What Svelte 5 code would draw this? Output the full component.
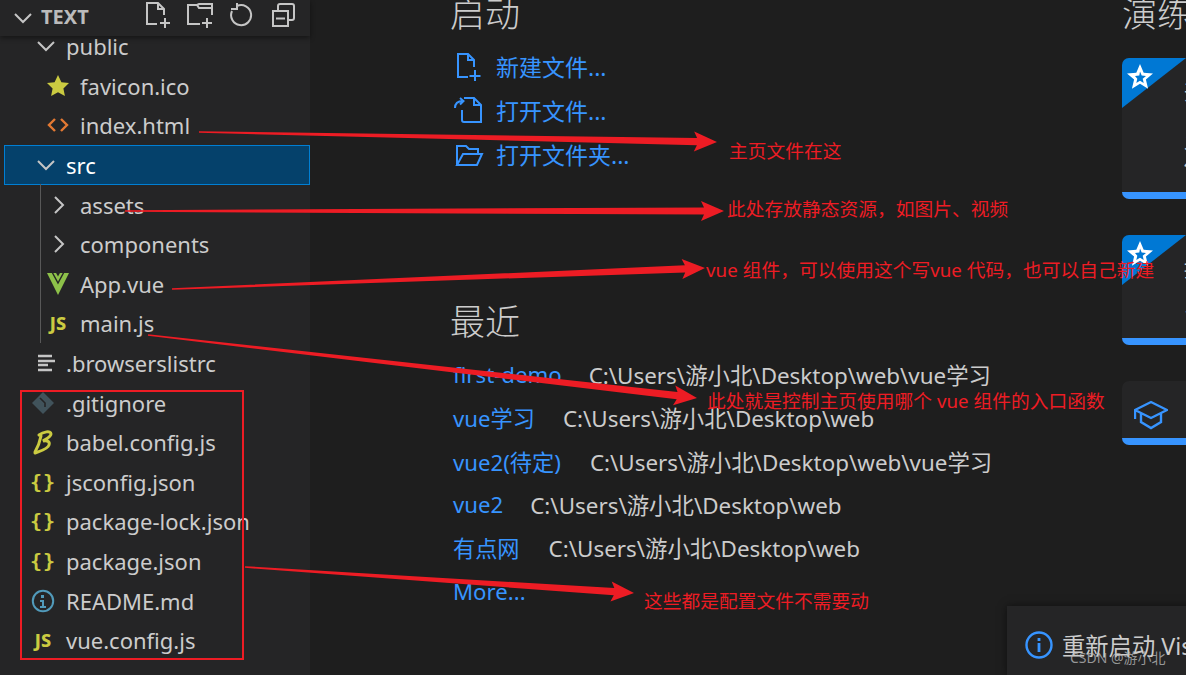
<script>
    const tree = [
        { name: 'public', depth: 1, icon: 'open' },
        { name: 'favicon.ico', depth: 2, icon: 'star' },
        { name: 'index.html', depth: 2, icon: 'html' },
        { name: 'src', depth: 1, icon: 'open', selected: true },
        { name: 'assets', depth: 2, icon: 'closed' },
        { name: 'components', depth: 2, icon: 'closed' },
        { name: 'App.vue', depth: 2, icon: 'vue' },
        { name: 'main.js', depth: 2, icon: 'js' },
        { name: '.browserslistrc', depth: 1, icon: 'lines' },
        { name: '.gitignore', depth: 1, icon: 'git' },
        { name: 'babel.config.js', depth: 1, icon: 'babel' },
        { name: 'jsconfig.json', depth: 1, icon: 'json' },
        { name: 'package-lock.json', depth: 1, icon: 'json' },
        { name: 'package.json', depth: 1, icon: 'json' },
        { name: 'README.md', depth: 1, icon: 'info' },
        { name: 'vue.config.js', depth: 1, icon: 'js' }
    ];

    const recent = [
        { name: 'first-demo', path: 'C:\\Users\\游小北\\Desktop\\web\\vue学习', gap: 27 },
        { name: 'vue学习', path: 'C:\\Users\\游小北\\Desktop\\web', gap: 28 },
        { name: 'vue2(待定)', path: 'C:\\Users\\游小北\\Desktop\\web\\vue学习', gap: 29 },
        { name: 'vue2', path: 'C:\\Users\\游小北\\Desktop\\web', gap: 27 },
        { name: '有点网', path: 'C:\\Users\\游小北\\Desktop\\web', gap: 29 }
    ];

    const notes = [
        { text: '主页文件在这', x: 729, y: 138 },
        { text: '此处存放静态资源，如图片、视频', x: 727, y: 196 },
        { text: 'vue 组件，可以使用这个写vue 代码，也可以自己新建', x: 706, y: 257 },
        { text: '此处就是控制主页使用哪个 vue 组件的入口函数', x: 707, y: 388 },
        { text: '这些都是配置文件不需要动', x: 644, y: 588 }
    ];

    // tapered line plus a notched head, tip at x2,y2
    function arrow(x1, y1, x2, y2) {
        const len = Math.hypot(x2 - x1, y2 - y1);
        const ux = (x2 - x1) / len;
        const uy = (y2 - y1) / len;
        const at = (along, side) =>
            `${(x1 + ux * along - uy * side).toFixed(1)},${(y1 + uy * along + ux * side).toFixed(1)}`;
        return [
            at(0, -0.8), at(len - 20, -3.6), at(len - 23, -10), at(len, 0),
            at(len - 23, 10), at(len - 20, 3.6), at(0, 0.8)
        ].join(' ');
    }

    const arrows = [
        arrow(199, 132, 717, 142),
        arrow(125, 211, 724, 211),
        arrow(172, 289, 705, 268),
        arrow(148, 335, 697, 398),
        arrow(245, 567, 634, 593)
    ];
</script>

{#snippet badge()}
    <svg class="badge" width="28" height="28" viewBox="0 0 28 28">
        <path fill="#ffffff" d="M14 1l3.700 8.700 9.300.8-7.100 6.100 2.200 9.100L14 20.800l-8.100 4.900 2.200-9.100L1 10.500l9.300-.8z" />
        <path fill="#0078d4" d="M14 8.500l1.700 4 4.300.4-3.300 2.800 1 4.200-3.700-2.200-3.700 2.200 1-4.200L9 12.900l4.300-.4z" />
    </svg>
{/snippet}

<div class="screen">
    <aside class="sidebar">
        <header class="bar">
            <svg class="bar-chevron" width="20" height="12" viewBox="0 0 20 12"><path d="M2 2l8 8 8-8" /></svg>
            <span class="bar-title">TEXT</span>
            <div class="bar-actions">
                <svg width="28" height="28" viewBox="0 0 28 28"><path d="M13 23H3V2h11l6 6v6M14 2v6h6M21 17v10M16 22h10" /></svg>
                <svg width="29" height="28" viewBox="0 0 29 28"><path d="M14 23H2V4h9l2 3h13v7M11 4l2-1h13v4M21 17v10M16 22h10" /></svg>
                <svg width="24" height="28" viewBox="0 0 24 28"><path d="M8 5a10 10 0 1 1-5 5M8 2v6H2" /></svg>
                <svg class="collapse" width="25" height="28" viewBox="0 0 25 28"><path d="M2 10h15v15H2zM7 10V5a2 2 0 0 1 2-2h12a2 2 0 0 1 2 2v12a2 2 0 0 1-2 2h-4M5 17.500h9" /></svg>
            </div>
        </header>

        <ul class="tree">
            {#each tree as item}
                <li class="row" class:deep={item.depth === 2} class:selected={item.selected}>
                    <span class="slot">
                        {#if item.icon === 'open'}
                            <svg class="chev" width="26" height="24" viewBox="0 0 26 24"><path d="M8 8l8 8 8-8" /></svg>
                        {:else if item.icon === 'closed'}
                            <svg class="chev" width="26" height="24" viewBox="0 0 26 24"><path d="M10 4l8 8-8 8" /></svg>
                        {:else if item.icon === 'star'}
                            <svg width="26" height="24" viewBox="0 0 26 24"><path fill="#cbcb41" d="M13 1l3.400 7.200 7.600.9-5.600 5.300 1.500 7.600L13 18.200 6.100 22l1.500-7.600L2 9.100l7.600-.9z" /></svg>
                        {:else if item.icon === 'html'}
                            <svg width="26" height="24" viewBox="0 0 26 24"><path fill="none" stroke="#e37933" stroke-width="2.400" d="M10 6l-6 6 6 6M16 6l6 6-6 6" /></svg>
                        {:else if item.icon === 'vue'}
                            <svg width="26" height="24" viewBox="0 0 26 24"><path fill="#8dc149" d="M2 1h22L13 23z" /><path fill="none" stroke="#252526" stroke-width="1.400" d="M7 0l6 11 6-11" /><path fill="#252526" d="M10.500 0h5L13 4.500z" /></svg>
                        {:else if item.icon === 'js'}
                            <span class="js">JS</span>
                        {:else if item.icon === 'lines'}
                            <svg class="lines" width="18" height="18" viewBox="0 0 18 18"><path d="M1 2h14M1 7h17M1 11h10M1 16h14" /></svg>
                        {:else if item.icon === 'git'}
                            <svg width="22" height="22" viewBox="0 0 22 22"><path fill="#41535b" d="M11 0l11 11-11 11L0 11z" /><path fill="none" stroke="#252526" stroke-width="1.600" d="M8 6l5 5v4" /></svg>
                        {:else if item.icon === 'babel'}
                            <svg width="22" height="26" viewBox="0 0 22 26"><path fill="none" stroke="#cbcb41" stroke-width="3" stroke-linecap="round" d="M7 6c4-3 12-5 12-1 0 3-5 5-8 7 5-1 7 1 6 4-1 4-9 6-14 8M9 7C8 12 6 18 3 23" /></svg>
                        {:else if item.icon === 'json'}
                            <span class="braces">&#123;&#125;</span>
                        {:else if item.icon === 'info'}
                            <svg width="24" height="24" viewBox="0 0 24 24"><circle cx="12" cy="12" r="10.200" fill="none" stroke="#519aba" stroke-width="2" /><path fill="#519aba" d="M10 6h3v3h-3zM9 11h4v6h2v2H9v-2h2v-4H9z" /></svg>
                        {/if}
                    </span>
                    <span class="name">{item.name}</span>
                </li>
            {/each}
        </ul>
        <i class="guide"></i>
    </aside>

    <main class="welcome">
        <section class="start-col">
            <h2>启动</h2>
            <ul class="links">
                <li>
                    <svg width="30" height="30" viewBox="0 0 30 30"><path d="M14 25H4V2h10l6 6v7M14 2v6h6M21 18v11M15.500 24h11" /></svg>
                    <span>新建文件...</span>
                </li>
                <li>
                    <svg width="30" height="30" viewBox="0 0 30 30"><path d="M10 2h10l7 7v17H10a2 2 0 0 1-2-2V14M20 2v7h7M1 12c0-5 3-7 8-7M6 2l3.500 3L6 8.500" /></svg>
                    <span>打开文件...</span>
                </li>
                <li>
                    <svg width="30" height="30" viewBox="0 0 30 30"><path d="M3 25V6h9l3 3h9v5M3 25h20l5-11H9z" /></svg>
                    <span>打开文件夹...</span>
                </li>
            </ul>

            <h2 class="recent-title">最近</h2>
            <ul class="recent">
                {#each recent as project}
                    <li>
                        <span class="project" style="margin-right: {project.gap}px">{project.name}</span>
                        <span class="path">{project.path}</span>
                    </li>
                {/each}
                <li><span class="project">More...</span></li>
            </ul>
        </section>

        <section class="walk-col">
            <h2>演练</h2>
            <div class="card tall corner">{@render badge()}<span class="card-text">开始使用 VS Code<br /><br />发现最佳的自定义方法<br />使用你的编辑器</span></div>
            <div class="card mid corner">{@render badge()}<span class="card-text">提高工作效率<br /><br />了解基础知识</span></div>
            <div class="card low">
                <svg class="cap" width="34" height="30" viewBox="0 0 34 30"><path d="M1 10L17 2l16 8-16 8zM1 10v9M7 13v9l10 6 10-6v-9" /></svg>
            </div>
        </section>
    </main>

    <div class="toast">
        <svg width="28" height="28" viewBox="0 0 28 28"><circle cx="14" cy="14" r="12.500" fill="none" stroke="#3794ff" stroke-width="2.400" /><path fill="#3794ff" d="M12.600 7h2.800v3h-2.800zM12.600 12h2.800v9h-2.800z" /></svg>
        <span>重新启动 Visual Studio Code</span>
    </div>

    <svg class="marks" width="1186" height="675" viewBox="0 0 1186 675">
        <rect x="21" y="391" width="222" height="268" fill="none" stroke="#ed1c24" stroke-width="2" />
        {#each arrows as points}
            <polygon {points} fill="#ed1c24" />
        {/each}
    </svg>

    {#each notes as note}
        <span class="note" style="left: {note.x}px; top: {note.y}px">{note.text}</span>
    {/each}

    <span class="watermark">CSDN @游小北</span>
</div>

<style>
    :global(body) {
        margin: 0;
        background: #1e1e1e;
    }

    .screen {
        position: relative;
        display: flex;
        width: 1186px;
        height: 675px;
        overflow: hidden;
        background: #1e1e1e;
        color: #cccccc;
        font-family: "Noto Sans", "Noto Sans CJK SC", sans-serif;
    }

    ul {
        list-style: none;
        margin: 0;
        padding: 0;
    }

    h2 {
        margin: 0;
        height: 44px;
        font-size: 35px;
        font-weight: 300;
        line-height: 44px;
        color: #cccccc;
    }

    /* explorer */
    .sidebar {
        position: relative;
        flex: none;
        width: 310px;
        background: #252526;
    }

    .bar {
        position: relative;
        z-index: 1;
        display: flex;
        align-items: center;
        height: 36px;
        padding-left: 13px;
        box-sizing: border-box;
        background: #252526;
        box-shadow: 0 2px 5px rgba(0, 0, 0, 0.45);
    }

    .bar svg {
        flex: none;
        fill: none;
        stroke: #c5c5c5;
        stroke-width: 2;
    }

    .bar-title {
        margin-left: 8px;
        padding-bottom: 4px;
        font-size: 20px;
        font-weight: 700;
        color: #bbbbbb;
    }

    .bar-actions {
        position: absolute;
        left: 144px;
        top: 1px;
        display: flex;
        gap: 14px;
    }

    .collapse {
        margin-left: 4px;
    }

    .tree {
        margin-top: -9.6px;
    }

    .row {
        display: flex;
        align-items: center;
        height: 39.6px;
        padding-left: 30px;
        box-sizing: border-box;
        font-size: 22px;
    }

    .row.deep {
        padding-left: 45px;
    }

    .row.selected {
        margin-left: 4px;
        padding-left: 26px;
        background: #05416b;
        outline: 1px solid #007fd4;
        outline-offset: -1px;
        color: #ffffff;
    }

    .slot {
        display: flex;
        flex: none;
        align-items: center;
        justify-content: center;
        width: 26px;
        margin-right: 10px;
    }

    .deep .slot {
        margin-right: 9px;
    }

    .chev {
        fill: none;
        stroke: #c5c5c5;
        stroke-width: 2;
    }

    .lines {
        margin-left: 6px;
        fill: none;
        stroke: #c5c5c5;
        stroke-width: 2.500;
    }

    .js {
        font-size: 18px;
        font-weight: 800;
        color: #cbcb41;
        letter-spacing: 0;
    }

    .braces {
        font-family: "DejaVu Sans Mono", monospace;
        font-size: 20px;
        font-weight: 700;
        color: #cbcb41;
        white-space: nowrap;
        letter-spacing: 1px;
    }

    .guide {
        position: absolute;
        left: 40px;
        top: 184px;
        width: 1px;
        height: 159px;
        background: #585858;
    }

    /* welcome page */
    .welcome {
        display: flex;
        flex: 1;
        margin-top: -8px;
        padding-left: 140px;
        min-width: 0;
    }

    .start-col {
        flex: none;
        width: 672px;
    }

    .links {
        margin-top: 9px;
    }

    .links li {
        display: flex;
        align-items: center;
        gap: 12px;
        height: 44px;
        padding-left: 4px;
        font-size: 23px;
        color: #3794ff;
    }

    .links span {
        padding-bottom: 2px;
    }

    .links svg {
        flex: none;
        fill: none;
        stroke: #3794ff;
        stroke-width: 2;
    }

    .recent-title {
        margin-top: 123px;
    }

    .recent {
        margin-top: 9px;
        font-size: 22.4px;
    }

    .recent li {
        display: flex;
        align-items: center;
        height: 43.3px;
        padding-left: 3px;
        white-space: nowrap;
    }

    .project {
        color: #3794ff;
        font-size: 22.2px;
    }

    .walk-col {
        flex: none;
        width: 400px;
    }

    .card {
        position: relative;
        overflow: hidden;
        box-sizing: border-box;
        width: 400px;
        margin-top: 36px;
        padding: 22px 0 0 62px;
        background: #252526;
        border-bottom: 7px solid #3794ff;
        border-radius: 7px;
        font-size: 20px;
        line-height: 25px;
        white-space: nowrap;
    }

    .tall {
        height: 141px;
        margin-top: 22px;
    }

    .mid {
        height: 110px;
    }

    .low {
        height: 64px;
        padding: 0;
    }

    .corner::before {
        content: "";
        position: absolute;
        left: 0;
        top: 0;
        width: 64px;
        height: 50px;
        background: #0078d4;
        clip-path: polygon(0 0, 100% 0, 0 100%);
    }

    .badge {
        position: absolute;
        left: 4px;
        top: 5px;
    }

    .card-text {
        position: relative;
    }

    .cap {
        position: absolute;
        left: 12px;
        top: 19px;
        fill: none;
        stroke: #3794ff;
        stroke-width: 2.400;
    }

    .toast {
        position: absolute;
        left: 1007px;
        top: 606px;
        display: flex;
        align-items: center;
        gap: 9px;
        width: 400px;
        height: 69px;
        padding-left: 18px;
        padding-top: 8px;
        box-sizing: border-box;
        background: #252526;
        box-shadow: 0 0 8px rgba(0, 0, 0, 0.5);
        font-size: 23.3px;
        white-space: nowrap;
    }

    .marks {
        position: absolute;
        left: 0;
        top: 0;
    }

    .note {
        position: absolute;
        font-size: 18.7px;
        letter-spacing: 0.06px;
        line-height: 25px;
        color: #ed1c24;
        white-space: nowrap;
    }

    .watermark {
        position: absolute;
        left: 1070px;
        top: 648px;
        font-size: 14px;
        line-height: 20px;
        color: rgba(190, 190, 190, 0.75);
        white-space: nowrap;
    }
</style>
